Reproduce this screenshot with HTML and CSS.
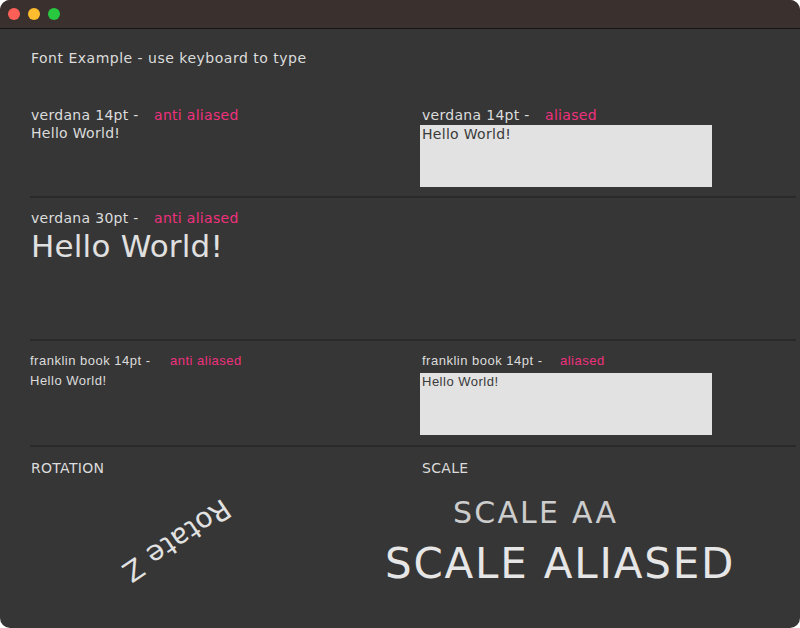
FILE: index.html
```html
<!DOCTYPE html>
<html>
<head>
<meta charset="utf-8">
<link rel="stylesheet" href="styles.css">
</head>
<body>
<div class="window">
  <div class="titlebar">
    <span class="light red"></span>
    <span class="light yellow"></span>
    <span class="light green"></span>
  </div>
  <div class="content">
    <div class="title">Font Example - use keyboard to type</div>

    <div class="row row1">
      <div class="col">
        <div class="label v"><span class="lbl w1">verdana 14pt -</span><span class="pink">anti aliased</span></div>
        <div class="hello v">Hello World!</div>
      </div>
      <div class="col right">
        <div class="label v pad"><span class="lbl w2">verdana 14pt -</span><span class="pink">aliased</span></div>
        <div class="box"><div class="boxtext v">Hello World!</div></div>
      </div>
    </div>

    <div class="sep sep1"></div>

    <div class="big-sec">
      <div class="label v"><span class="lbl w1">verdana 30pt -</span><span class="pink">anti aliased</span></div>
      <div class="big">Hello World!</div>
    </div>

    <div class="sep sep2"></div>

    <div class="row row3">
      <div class="col">
        <div class="label f"><span class="lbl w3">franklin book 14pt -</span><span class="pink">anti aliased</span></div>
        <div class="hello f fh">Hello World!</div>
      </div>
      <div class="col right">
        <div class="label f pad"><span class="lbl w4">franklin book 14pt -</span><span class="pink">aliased</span></div>
        <div class="box box3"><div class="boxtext f">Hello World!</div></div>
      </div>
    </div>

    <div class="sep sep3"></div>

    <div class="row row4">
      <div class="col">
        <div class="label v">ROTATION</div>
        <div class="rotate">Rotate Z</div>
      </div>
      <div class="col right">
        <div class="label v pad">SCALE</div>
        <div class="scale-aa">SCALE AA</div>
        <div class="scale-al">SCALE ALIASED</div>
      </div>
    </div>
  </div>
</div>
</body>
</html>
```

FILE: styles.css
```css
html, body {
  margin: 0;
  padding: 0;
  background: #ffffff;
}
.window {
  width: 800px;
  height: 628px;
  background: #363636;
  border-radius: 10px;
  overflow: hidden;
  font-family: "DejaVu Sans", Verdana, sans-serif;
  color: #dcdcdc;
}
.titlebar {
  height: 28px;
  background: #3a302d;
  border-bottom: 1px solid #151515;
  display: flex;
  align-items: center;
  padding-left: 8px;
  gap: 8px;
  box-sizing: content-box;
}
.light {
  width: 12px;
  height: 12px;
  border-radius: 50%;
  display: block;
}
.red { background: #fe5f57; }
.yellow { background: #febc2e; }
.green { background: #28c840; }

.content {
  padding: 20px 4px 0 30px;
}
.title {
  font-size: 14px;
  line-height: 18px;
  letter-spacing: 0.5px;
  padding-left: 1px;
}
.row {
  display: grid;
  grid-template-columns: 390px 1fr;
}
.row1 { margin-top: 39px; }
.label {
  line-height: 18px;
  white-space: nowrap;
}
.v {
  font-size: 14px;
  letter-spacing: 0.3px;
  padding-left: 1px;
}
.f {
  font-family: "Liberation Sans", Arial, sans-serif;
  font-size: 13px;
  letter-spacing: 0.5px;
}
.right .pad { padding-left: 2px; }
.lbl { display: inline-block; }
.w1 { width: 123px; }
.w2 { width: 123px; }
.w3 { width: 140px; }
.w4 { width: 138px; }
.pink { color: #f0307d; }
.hello { line-height: 18px; }
.box {
  width: 292px;
  height: 62px;
  background: #e2e2e2;
  margin-top: 1px;
}
.boxtext {
  color: #3a3a3a;
  line-height: 18px;
  padding-left: 2px;
}
.sep {
  height: 2px;
  background: #2a2a2a;
}
.sep1 { margin-top: 9px; }
.big-sec { margin-top: 11px; height: 130px; }
.big {
  font-size: 31px;
  line-height: 38px;
  padding-left: 1px;
  letter-spacing: 0.2px;
  color: #e0e0e0;
}
.sep2 { margin-top: 0; }
.row3 { margin-top: 10px; }
.row3 .label { line-height: 20px; }
.fh { margin-top: 1px; }
.box3 { margin-top: 2px; }
.sep3 { margin-top: 10px; }
.row4 { margin-top: 12px; }
.rotate {
  width: 160px;
  margin-left: 66px;
  margin-top: 47px;
  text-align: center;
  font-size: 28px;
  line-height: 32px;
  letter-spacing: 0.5px;
  color: #e2e2e2;
  transform: rotate(146deg);
  white-space: nowrap;
}
.scale-aa {
  margin-left: 33px;
  margin-top: 18px;
  font-size: 30px;
  line-height: 36px;
  letter-spacing: 2.2px;
  color: #cdcdcd;
  white-space: nowrap;
}
.scale-al {
  margin-left: -35px;
  margin-top: 10px;
  font-size: 42px;
  line-height: 46px;
  letter-spacing: 1.8px;
  color: #e6e6e6;
  white-space: nowrap;
}
```
